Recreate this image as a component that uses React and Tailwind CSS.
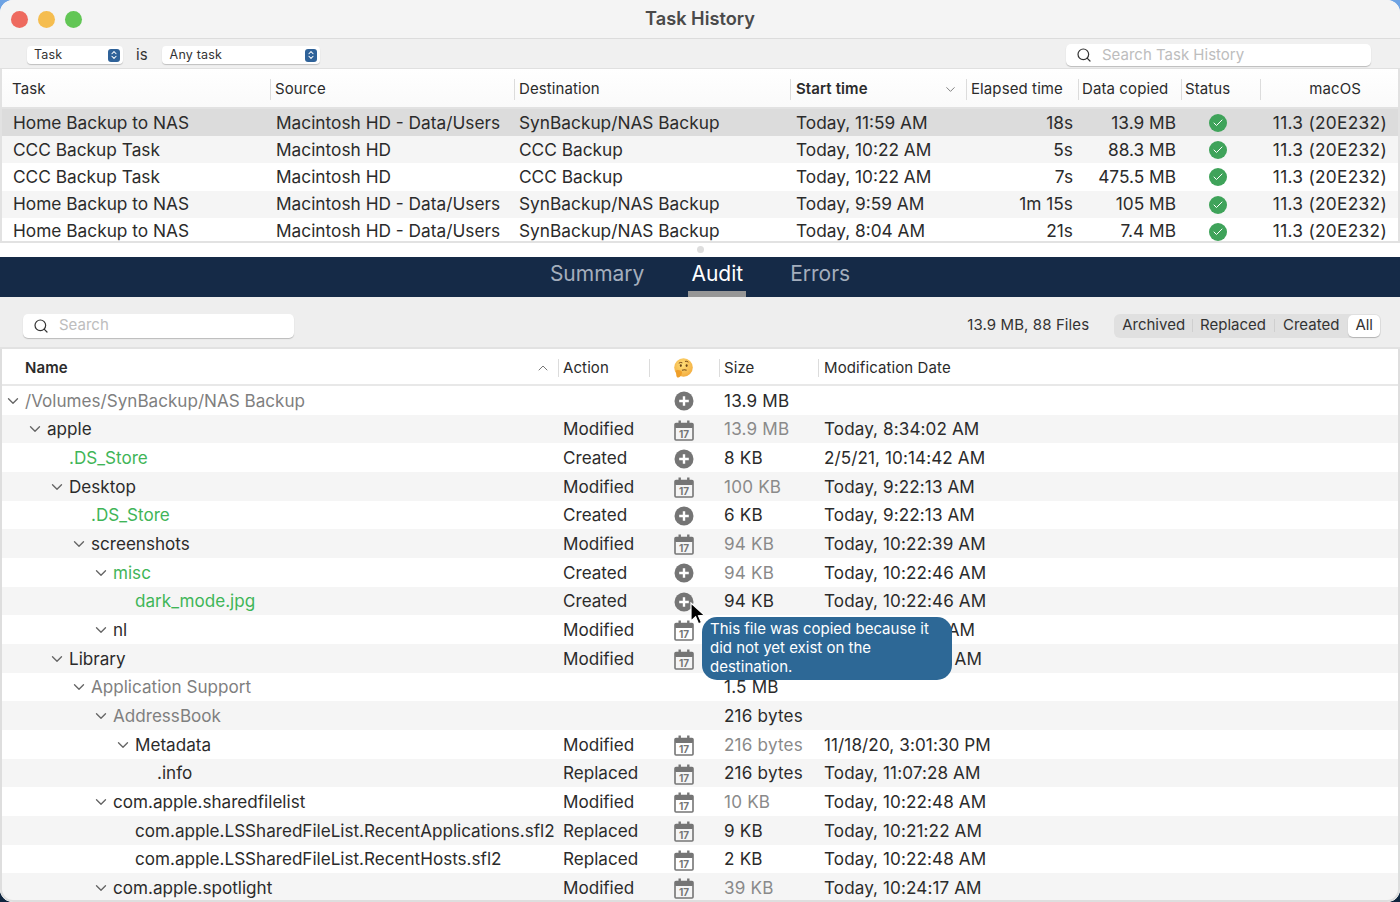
import React from "react";
import { Search, ChevronDown, ChevronUp, ChevronsUpDown, Check } from "lucide-react";

const FONT = "font-['Inter','Liberation_Sans',sans-serif]";

const tasks = [
  ["Home Backup to NAS", "Macintosh HD - Data/Users", "SynBackup/NAS Backup", "Today, 11:59 AM", "18s", "13.9 MB"],
  ["CCC Backup Task", "Macintosh HD", "CCC Backup", "Today, 10:22 AM", "5s", "88.3 MB"],
  ["CCC Backup Task", "Macintosh HD", "CCC Backup", "Today, 10:22 AM", "7s", "475.5 MB"],
  ["Home Backup to NAS", "Macintosh HD - Data/Users", "SynBackup/NAS Backup", "Today, 9:59 AM", "1m 15s", "105 MB"],
  ["Home Backup to NAS", "Macintosh HD - Data/Users", "SynBackup/NAS Backup", "Today, 8:04 AM", "21s", "7.4 MB"],
];

const files = [
  ["/Volumes/SynBackup/NAS Backup", 0, 1, "gray", "", "plus", "13.9 MB", 0, ""],
  ["apple", 1, 1, "", "Modified", "cal", "13.9 MB", 1, "Today, 8:34:02 AM"],
  [".DS_Store", 2, 0, "green", "Created", "plus", "8 KB", 0, "2/5/21, 10:14:42 AM"],
  ["Desktop", 2, 1, "", "Modified", "cal", "100 KB", 1, "Today, 9:22:13 AM"],
  [".DS_Store", 3, 0, "green", "Created", "plus", "6 KB", 0, "Today, 9:22:13 AM"],
  ["screenshots", 3, 1, "", "Modified", "cal", "94 KB", 1, "Today, 10:22:39 AM"],
  ["misc", 4, 1, "green", "Created", "plus", "94 KB", 1, "Today, 10:22:46 AM"],
  ["dark_mode.jpg", 5, 0, "green", "Created", "plus", "94 KB", 0, "Today, 10:22:46 AM"],
  ["nl", 4, 1, "", "Modified", "cal", "", 0, "Today, 10:11:21 AM"],
  ["Library", 2, 1, "", "Modified", "cal", "", 0, "Today, 10:21:22 AM"],
  ["Application Support", 3, 1, "gray", "", "", "1.5 MB", 0, ""],
  ["AddressBook", 4, 1, "gray", "", "", "216 bytes", 0, ""],
  ["Metadata", 5, 1, "", "Modified", "cal", "216 bytes", 1, "11/18/20, 3:01:30 PM"],
  [".info", 6, 0, "", "Replaced", "cal", "216 bytes", 0, "Today, 11:07:28 AM"],
  ["com.apple.sharedfilelist", 4, 1, "", "Modified", "cal", "10 KB", 1, "Today, 10:22:48 AM"],
  ["com.apple.LSSharedFileList.RecentApplications.sfl2", 5, 0, "", "Replaced", "cal", "9 KB", 0, "Today, 10:21:22 AM"],
  ["com.apple.LSSharedFileList.RecentHosts.sfl2", 5, 0, "", "Replaced", "cal", "2 KB", 0, "Today, 10:22:48 AM"],
  ["com.apple.spotlight", 4, 1, "", "Modified", "cal", "39 KB", 1, "Today, 10:24:17 AM"],
];

function PlusIcon() {
  return (
    <svg width="20" height="20" viewBox="0 0 20 20">
      <circle cx="10" cy="10" r="9.5" fill="#757575" />
      <path d="M10 5.2v9.6M5.2 10h9.6" stroke="#fff" strokeWidth="2.4" />
    </svg>
  );
}

function CalIcon() {
  return (
    <svg width="20" height="21" viewBox="0 0 20 21">
      <rect x="1" y="3.5" width="18" height="16.5" rx="1" fill="none" stroke="#757575" strokeWidth="1.6" />
      <rect x="1" y="3.5" width="18" height="4.5" rx="1" fill="#757575" />
      <rect x="4.5" y="0.5" width="2.4" height="5" fill="#757575" />
      <rect x="13.1" y="0.5" width="2.4" height="5" fill="#757575" />
      <text x="10" y="17.6" textAnchor="middle" fontSize="10" fontWeight="700" fill="#757575" fontFamily="Inter, sans-serif">17</text>
    </svg>
  );
}

function Thinking() {
  return (
    <svg width="20" height="20" viewBox="0 0 20 20">
      <defs>
        <radialGradient id="fc" cx="45%" cy="35%" r="70%">
          <stop offset="0" stopColor="#ffe07a" />
          <stop offset="1" stopColor="#f2a93b" />
        </radialGradient>
      </defs>
      <circle cx="10.5" cy="9.5" r="9.3" fill="url(#fc)" />
      <ellipse cx="7.8" cy="7.6" rx="1" ry="1.4" fill="#6b4416" />
      <ellipse cx="13.6" cy="7.6" rx="1" ry="1.4" fill="#6b4416" />
      <path d="M5.8 5.2q2-1.4 3.6-.3M12 3.4q2-.6 3.4.8" stroke="#7a4e1c" strokeWidth="1" fill="none" />
      <path d="M9 12.2q2.6-.8 4.6 0" stroke="#7a4e1c" strokeWidth="1.1" fill="none" />
      <path d="M3.6 12.2c1.6-.5 3.2.2 4.4.6 1 .4 1.3 1.7.8 3-.5 1.6-1.6 3.4-3.3 3.7-1.6.1-2.2-1.2-2.2-2.6 0-1.6-.7-2.7-.7-3.4 0-.6.4-1 1-1.3z" fill="#ef9f2a" />
    </svg>
  );
}

function Sep() {
  return <span className="absolute left-0 top-[7px] bottom-[7px] w-px bg-[#dcdcdc]" />;
}

function Stepper() {
  return (
    <span className="flex h-[13px] w-[12px] items-center justify-center rounded-[3px] bg-[#2f6299] text-white">
      <ChevronsUpDown size={10} strokeWidth={2.5} />
    </span>
  );
}

function SearchBox({ label, className }) {
  return (
    <div className={`flex items-center rounded-[5px] bg-white shadow-[0_1px_1px_rgba(0,0,0,0.22)] ${className}`}>
      <Search size={16} strokeWidth={1.8} className="ml-[10px] text-[#333]" />
      <span className="ml-[10px] text-[15px] text-[#bdbdbd]">{label}</span>
    </div>
  );
}

function TopHeader() {
  return (
    <div className="grid h-[40px] grid-cols-[268px_244px_276px_176px_112px_103px_79px_1fr] border-b-2 border-[#e2e2e2] bg-gradient-to-b from-white to-[#fafafa] pt-[3px] text-[15px] tracking-[0.1px] text-[#2b2b2b]">
      <div className="relative flex items-center pl-[10px]">Task</div>
      <div className="relative flex items-center pl-[5px]"><Sep />Source</div>
      <div className="relative flex items-center pl-[5px]"><Sep />Destination</div>
      <div className="relative flex items-center justify-between pl-[6px] pr-[8px] font-semibold"><Sep />Start time<ChevronDown size={15} className="text-[#777]" strokeWidth={1.5} /></div>
      <div className="relative flex items-center pl-[5px]"><Sep />Elapsed time</div>
      <div className="relative flex items-center pl-[4px]"><Sep />Data copied</div>
      <div className="relative flex items-center pl-[4px]"><Sep />Status</div>
      <div className="relative flex items-center justify-end pr-[37px]"><Sep />macOS</div>
    </div>
  );
}

function TaskRow({ row, i }) {
  const bg = i === 0 ? "bg-[#dcdcdc]" : i % 2 === 1 ? "bg-[#f5f5f5]" : "bg-white";
  return (
    <div className={`grid h-[27.2px] grid-cols-[268px_244px_276px_176px_112px_103px_79px_1fr] items-center text-[17.3px] text-[#2b2b2b] ${bg}`}>
      <div className="pl-[11px] whitespace-nowrap">{row[0]}</div>
      <div className="pl-[6px] whitespace-nowrap">{row[1]}</div>
      <div className="pl-[5px] whitespace-nowrap">{row[2]}</div>
      <div className="pl-[6px] whitespace-nowrap">{row[3]}</div>
      <div className="pr-[5px] text-right">{row[4]}</div>
      <div className="pr-[5px] text-right">{row[5]}</div>
      <div className="flex justify-center pr-[5px] pt-[1px]">
        <span className="flex h-[18px] w-[18px] items-center justify-center rounded-full bg-[#3fa35a] text-white">
          <Check size={12} strokeWidth={2} />
        </span>
      </div>
      <div className="pr-[11px] text-right tracking-[0.3px] whitespace-nowrap">11.3 (20E232)</div>
    </div>
  );
}

const toneClass = { gray: "text-[#7f7f7f]", green: "text-[#3fb558]", "": "text-[#2b2b2b]" };
const levelPad = ["pl-[25px]", "pl-[47px]", "pl-[69px]", "pl-[91px]", "pl-[113px]", "pl-[135px]", "pl-[157px]"];

function FileRow({ f, i }) {
  const [name, level, chev, tone, action, icon, size, sizeGray, date] = f;
  return (
    <div className={`grid h-[28.68px] grid-cols-[558px_91px_70px_99px_1fr] items-center text-[17.1px] text-[#2b2b2b] ${i % 2 === 1 ? "bg-[#f5f5f5]" : "bg-white"}`}>
      <div className={`relative whitespace-nowrap ${levelPad[level]} ${toneClass[tone]}`}>
        {chev ? (
          <ChevronDown size={18} strokeWidth={1.8} className="absolute top-[4px] ml-[-21px] text-[#666]" />
        ) : null}
        {name}
      </div>
      <div className="pl-[5px]">{action}</div>
      <div className="flex justify-center pt-[2px]">
        {icon === "plus" ? <PlusIcon /> : icon === "cal" ? <CalIcon /> : null}
      </div>
      <div className={`pl-[5px] tracking-[0.2px] whitespace-nowrap ${sizeGray ? "text-[#8a8a8a]" : ""}`}>{size}</div>
      <div className="pl-[6px] tracking-[0.1px] whitespace-nowrap">{date}</div>
    </div>
  );
}

export default function App() {
  return (
    <div className="h-[902px] w-[1400px] bg-gradient-to-b from-[#6ea3e4] to-[#10263f]">
      <div className={`relative h-[902px] w-[1400px] overflow-hidden rounded-[13px] bg-white ${FONT}`}>
        {/* Title bar */}
        <div className="relative flex h-[39px] items-center justify-center border-b border-[#dcdcdc] bg-[#f4f4f4] pb-[1px]">
          <div className="absolute left-[11px] top-[11px] flex gap-[10px]">
            <span className="h-[17px] w-[17px] rounded-full bg-[#ee6a5f]" />
            <span className="h-[17px] w-[17px] rounded-full bg-[#f5bd4f]" />
            <span className="h-[17px] w-[17px] rounded-full bg-[#62c655]" />
          </div>
          <span className="text-[18.2px] font-semibold text-[#4a4a4a]">Task History</span>
        </div>

        {/* Filter bar */}
        <div className="flex h-[30px] items-center justify-between border-b border-[#e0e0e0] bg-[#f0f0f0] pl-[27px] pr-[29px] pt-[3px]">
          <div className="flex items-center">
            <div className="flex h-[18px] w-[96px] items-center justify-between rounded-[4px] bg-white pl-[7px] pr-[3px] text-[12.5px] tracking-[0.2px] text-[#333] shadow-[0_1px_1px_rgba(0,0,0,0.2)]">
              Task<Stepper />
            </div>
            <span className="ml-[13px] text-[15px] text-[#333]">is</span>
            <div className="ml-[14px] flex h-[18px] w-[158px] items-center justify-between rounded-[4px] bg-white pl-[8px] pr-[3px] text-[12.5px] tracking-[0.2px] text-[#333] shadow-[0_1px_1px_rgba(0,0,0,0.2)]">
              Any task<Stepper />
            </div>
          </div>
          <SearchBox label="Search Task History" className="h-[22px] w-[305px]" />
        </div>

        {/* Task table */}
        <div className="h-[174px] overflow-hidden border-x-2 border-b-2 border-[#e2e2e2]">
          <TopHeader />
          {tasks.map((t, i) => <TaskRow key={i} row={t} i={i} />)}
        </div>

        {/* Splitter */}
        <div className="flex h-[14px] items-center justify-center bg-white pb-[2px]">
          <span className="h-[7px] w-[7px] rounded-full bg-[#dedede]" />
        </div>

        {/* Tabs */}
        <div className="flex h-[40px] justify-center gap-[47px] bg-[#152a47] text-[21px]">
          <div className="flex items-center pb-[6px] text-[#a4aebd]">Summary</div>
          <div className="relative flex items-center pb-[6px] text-white">
            Audit
            <span className="absolute bottom-0 left-[-3px] right-[-3px] h-[6px] bg-[#969696]" />
          </div>
          <div className="flex items-center pb-[6px] text-[#a4aebd]">Errors</div>
        </div>

        {/* Toolbar */}
        <div className="flex h-[52px] items-center justify-between border-b-2 border-[#e2e2e2] bg-[#eeeeee] pl-[23px] pr-[19px] pt-[7px]">
          <SearchBox label="Search" className="h-[24px] w-[271px]" />
          <div className="flex items-center text-[15px] text-[#333]">
            <span className="mr-[25px] tracking-[0.1px]">13.9 MB, 88 Files</span>
            <div className="flex h-[24px] items-center rounded-[6px] bg-[#e0e0e0] pl-[8px] pr-[1px]">
              <span>Archived</span>
              <span className="mx-[7px] h-[13px] w-px bg-[#cfcfcf]" />
              <span>Replaced</span>
              <span className="mx-[8px] h-[13px] w-px bg-[#cfcfcf]" />
              <span>Created</span>
              <span className="ml-[9px] flex h-[22px] items-center rounded-[5px] bg-white px-[7px] shadow-[0_1px_1px_rgba(0,0,0,0.2)]">All</span>
            </div>
          </div>
        </div>

        {/* File table header */}
        <div className="grid h-[37px] grid-cols-[558px_91px_70px_99px_1fr] border-b-2 border-[#e8e8e8] bg-white pt-[3px] text-[15px] tracking-[0.1px] text-[#2b2b2b]">
          <div className="relative flex items-center justify-between pl-[25px] pr-[7px] font-semibold">Name<ChevronUp size={16} strokeWidth={1.5} className="text-[#777]" /></div>
          <div className="relative flex items-center pl-[5px]"><Sep />Action</div>
          <div className="relative flex items-center justify-center pr-[2px]"><Sep /><Thinking /></div>
          <div className="relative flex items-center pl-[5px]"><Sep />Size</div>
          <div className="relative flex items-center pl-[6px]"><Sep />Modification Date</div>
        </div>
        <div>
          {files.map((f, i) => <FileRow key={i} f={f} i={i} />)}
        </div>

        {/* Window edge over the file table */}
        <div className="pointer-events-none absolute inset-x-0 bottom-0 top-[349px] rounded-b-[13px] border-x-2 border-b-2 border-[#dedede]" />

        {/* Tooltip */}
        <div className="absolute left-[702px] top-[617px] h-[63px] w-[250px] rounded-[15px] bg-[#2d6896] py-[2px] pl-[8px] pr-[4px] text-[15px] leading-[19px] text-white">
          This file was copied because it did not yet exist on the destination.
        </div>
        {/* Cursor */}
        <svg className="absolute left-[689px] top-[602px]" width="16" height="24" viewBox="0 0 16 24">
          <path d="M2 1v18l4.6-4.2 2.9 7 3-1.3-3-6.8 6-.4z" fill="#000" stroke="#fff" strokeWidth="1.2" />
        </svg>
      </div>
    </div>
  );
}
